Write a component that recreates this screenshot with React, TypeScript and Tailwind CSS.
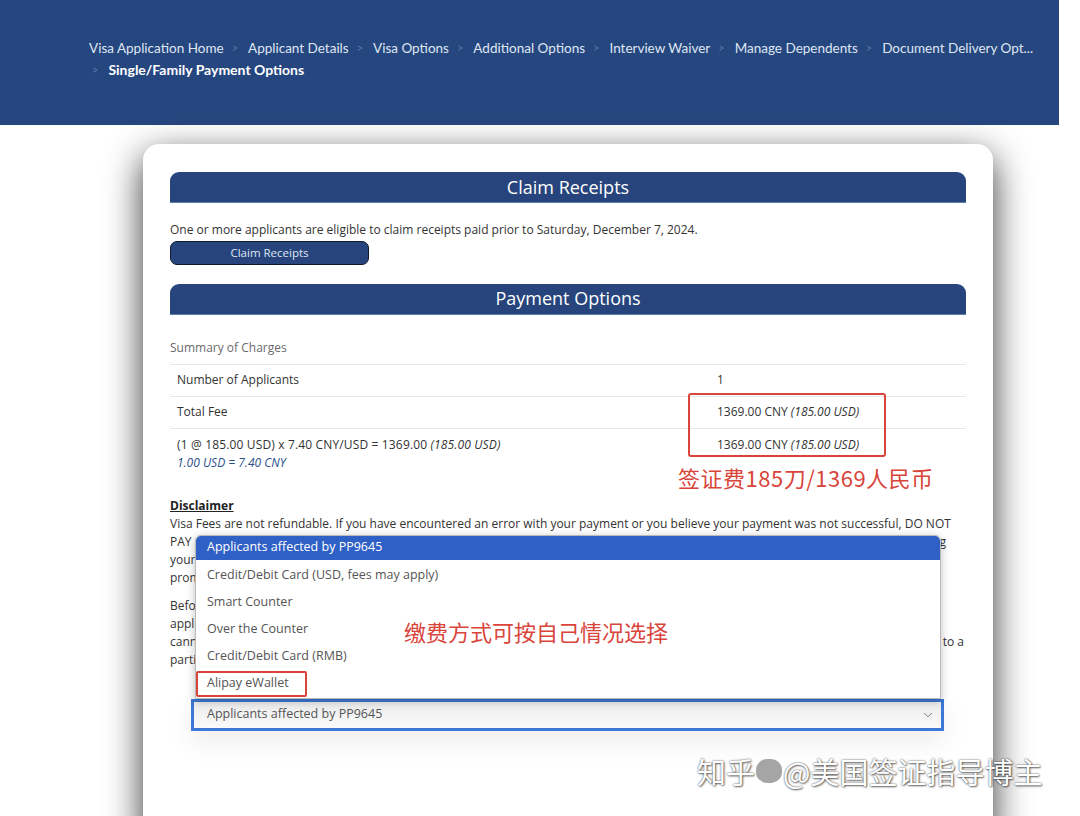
import { ChevronDown } from "lucide-react";

const crumbs = [
  "Visa Application Home",
  "Applicant Details",
  "Visa Options",
  "Additional Options",
  "Interview Waiver",
  "Manage Dependents",
  "Document Delivery Opt...",
];

const options = [
  "Credit/Debit Card (USD, fees may apply)",
  "Smart Counter",
  "Over the Counter",
  "Credit/Debit Card (RMB)",
  "Alipay eWallet",
];

const cjk = "font-['Noto_Sans_CJK_SC','Noto_Sans',sans-serif]";

function SectionBar({ title }: { title: string }) {
  return (
    <div className="h-[31px] rounded-t-[9px] bg-[#27457c] border-b border-[#5b7bb0] flex items-center justify-center text-white text-[18px]">
      {title}
    </div>
  );
}

export default function App() {
  return (
    <div className="relative min-h-[816px] w-[1080px] overflow-hidden bg-white font-['Open_Sans',sans-serif] text-[#333]">
      {/* top bar with breadcrumb */}
      <div className="h-[125px] w-[1059px] bg-[#26467f] pt-[37px] pl-[89px] pr-[16px]">
        <div className="flex flex-wrap font-['Lato',sans-serif] text-[13.5px] leading-[22px] text-[#dfe6f3]">
          {crumbs.map((c, i) => (
            <span key={c} className="flex items-center">
              {i > 0 && <span className="ml-[8px] mr-[10px] text-[#5f77a6] text-[11px]">&gt;</span>}
              <span>{c}</span>
            </span>
          ))}
          <span className="flex items-center pl-[3px]">
            <span className="mr-[10px] text-[#5f77a6] text-[11px]">&gt;</span>
            <span className="font-bold text-white text-[14px]">Single/Family Payment Options</span>
          </span>
        </div>
      </div>

      {/* card */}
      <div className="relative ml-[143px] mt-[19px] w-[850px] min-h-[700px] rounded-[16px] bg-white px-[27px] pt-[28px] shadow-[0_12px_36px_rgba(0,0,0,0.8)]">
        <SectionBar title="Claim Receipts" />
        <p className="mt-[18px] text-[12px] leading-[18px]">
          One or more applicants are eligible to claim receipts paid prior to Saturday, December 7, 2024.
        </p>
        <button className="mt-[1px] h-[24px] w-[199px] rounded-[7px] border border-[#111a2c] bg-[#27457c] text-[11.5px] text-[#dfe6f3]">
          Claim Receipts
        </button>

        <div className="mt-[19px]">
          <SectionBar title="Payment Options" />
        </div>

        <div className="mt-[24px] pb-[7px] border-b border-[#e6e6e6] text-[12px] leading-[18px] text-[#6b6b6b]">
          Summary of Charges
        </div>
        <div className="text-[12px] leading-[18px] text-[#333]">
          <div className="flex h-[32px] items-center border-b border-[#e6e6e6] px-[7px]">
            <div className="w-[540px]">Number of Applicants</div>
            <div>1</div>
          </div>
          <div className="flex h-[32px] items-center border-b border-[#e6e6e6] px-[7px]">
            <div className="w-[540px]">Total Fee</div>
            <div>
              1369.00 CNY <i>(185.00 USD)</i>
            </div>
          </div>
          <div className="flex px-[7px] pt-[7px]">
            <div className="w-[540px]">
              <div className="tracking-[0.15px]">
                (1 @ 185.00 USD) x 7.40 CNY/USD = 1369.00 <i>(185.00 USD)</i>
              </div>
              <div className="italic text-[#2c4f8c]">1.00 USD = 7.40 CNY</div>
            </div>
            <div>
              1369.00 CNY <i>(185.00 USD)</i>
            </div>
          </div>
        </div>

        <div className="mt-[25px] text-[12px] leading-[18px]">
          <div className="font-bold underline text-[#222]">Disclaimer</div>
          <div>
            <div className="whitespace-nowrap">
              Visa Fees are not refundable. If you have encountered an error with your payment or you believe your payment was not successful, DO NOT
            </div>
            <div className="flex justify-between whitespace-nowrap overflow-hidden pr-[20px]">
              <span>PAY AGAIN. Please contact the customer service center for assistance before attempting another payment, as an additional</span>
              <span>pending</span>
            </div>
            <div className="whitespace-nowrap overflow-hidden">
              your account will be charged twice and the duplicate charge will not be refunded. Please allow 24 hours for processing.
            </div>
            <div className="whitespace-nowrap overflow-hidden">
              promptly after your payment status has been updated.
            </div>
          </div>
          <div className="mt-[10px]">
            <div className="whitespace-nowrap overflow-hidden">
              Before selecting a payment method, please ensure that the visa class and the number of applicants are correct for your
            </div>
            <div className="whitespace-nowrap overflow-hidden">
              application. Fees paid for one applicant cannot be transferred to another applicant, and fees paid for one visa class
            </div>
            <div className="flex justify-between whitespace-nowrap overflow-hidden pr-[2px]">
              <span>cannot be applied to a different visa class. Receipts are valid for one year and may only be transferred</span>
              <span>to a</span>
            </div>
            <div className="whitespace-nowrap overflow-hidden">
              particular applicant in this country.
            </div>
          </div>
        </div>

        {/* select with open list */}
        <div className="relative mt-[30px] ml-[21px] w-[753px]">
          <div className="absolute bottom-full left-[4px] z-10 w-[746px] rounded-t-[6px] border border-[#b9b9b9] bg-white shadow-[0_2px_10px_rgba(0,0,0,0.25)] text-[12.5px]">
            <div className="flex h-[24px] items-center rounded-t-[5px] bg-[#2f60c6] pl-[11px] text-white">
              Applicants affected by PP9645
            </div>
            <div className="pt-[2px] pb-[1px]">
              {options.map((o) => (
                <div key={o} className="flex h-[27px] items-center pl-[11px] text-[#555]">
                  {o}
                </div>
              ))}
            </div>
            <div className="absolute left-0 top-[135px] h-[26px] w-[111px] rounded-[2px] border-2 border-[#d9453b]" />
            <div className={`absolute left-[208px] top-[80px] text-[22px] leading-[30px] text-[#d9453b] ${cjk}`}>
              缴费方式可按自己情况选择
            </div>
          </div>
          <div className="flex h-[32px] items-center justify-between border-[3px] border-[#3d78d6] bg-gradient-to-b from-[#ececec] to-[#fafafa] pl-[13px] pr-[6px] text-[12.5px] text-[#555] shadow-[0_10px_28px_rgba(0,0,0,0.08)]">
            <span>Applicants affected by PP9645</span>
            <ChevronDown size={14} strokeWidth={1.5} className="text-[#666]" />
          </div>
        </div>

        {/* annotations on fee table */}
        <div className="absolute left-[545px] top-[249px] h-[64px] w-[198px] rounded-[3px] border-2 border-[#d9453b]" />
        <div className={`absolute left-[535px] top-[318px] text-[22px] leading-[30px] tracking-[0.5px] text-[#d9453b] ${cjk}`}>
          签证费185刀/1369人民币
        </div>
      </div>

      {/* watermark */}
      <div
        className={`absolute left-[697px] top-[752px] flex items-center text-[29px] leading-[38px] text-white [text-shadow:0_0_2px_rgba(0,0,0,0.7),1px_1px_2px_rgba(0,0,0,0.5)] ${cjk}`}
      >
        <span>知乎</span>
        <span className="mx-[1px] h-[24px] w-[26px] rounded-[45%] bg-[#a5a5a5]" />
        <span>@美国签证指导博主</span>
      </div>
    </div>
  );
}
